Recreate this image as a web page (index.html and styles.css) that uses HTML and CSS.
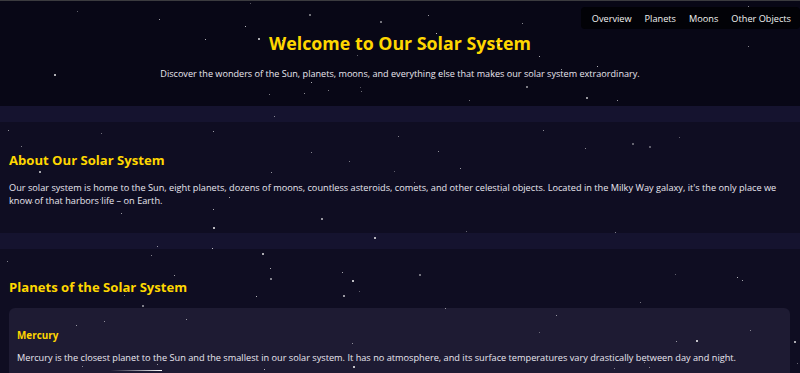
FILE: index.html
```html
<!DOCTYPE html>
<html>
  <head>
    <meta charset="utf-8">
    <title>Our Solar System</title>
    <link rel="stylesheet" href="styles.css">
  </head>
  <body>
    <div id="stars" class="stars"></div>

    <nav class="topnav">
      <a href="#overview">Overview</a>
      <a href="#planets">Planets</a>
      <a href="#moons">Moons</a>
      <a href="#other">Other Objects</a>
    </nav>

    <header class="hero" id="overview">
      <h1>Welcome to Our Solar System</h1>
      <p>Discover the wonders of the Sun, planets, moons, and everything else that makes our solar system extraordinary.</p>
    </header>

    <main>
      <section class="block">
        <h2>About Our Solar System</h2>
        <p>Our solar system is home to the Sun, eight planets, dozens of moons, countless asteroids, comets, and other celestial objects. Located in the Milky Way galaxy, it's the only place we know of that harbors life – on Earth.</p>
      </section>

      <section class="block" id="planets">
        <h2>Planets of the Solar System</h2>
        <div class="card">
          <h3>Mercury</h3>
          <p>Mercury is the closest planet to the Sun and the smallest in our solar system. It has no atmosphere, and its surface temperatures vary drastically between day and night.</p>
        </div>
      </section>
    </main>

    <div class="shooting"></div>

    <script src="stars.js"></script>
  </body>
</html>
```

FILE: styles.css
```css
body {
  margin: 0;
  background-color: #15132f;
  color: #e8e6ef;
  font-family: "Open Sans", "DejaVu Sans", sans-serif;
  border-top: 1px solid #3b3b3f;
  overflow: hidden;
}

.stars {
  position: fixed;
  top: 0;
  left: 0;
  width: 100%;
  height: 100%;
  pointer-events: none;
  z-index: 5;
}
.star {
  position: absolute;
  background: #fff;
  border-radius: 50%;
}

.topnav {
  position: absolute;
  top: 7px;
  right: 0;
  display: flex;
  gap: 13px;
  padding: 0 9px 0 11px;
  height: 22px;
  align-items: center;
  background-color: #020207;
  border-radius: 4px;
  z-index: 10;
}
.topnav a {
  color: #f2f2f2;
  text-decoration: none;
  font-size: 9.2px;
}

.hero {
  background-color: #080716;
  text-align: center;
  padding: 31px 0 26px;
}
.hero h1 {
  margin: 0;
  font-size: 17.8px;
  line-height: 22px;
  font-weight: 700;
  color: #ffd700;
}
.hero p {
  margin: 13px 0 0;
  font-size: 9.1px;
  line-height: 13px;
}

.block {
  background-color: #0f0d22;
  margin: 16px 0;
  padding: 29px 10px 26px 9px;
}
.block h2 {
  margin: 0;
  font-size: 13.1px;
  line-height: 18px;
  color: #ffd700;
  font-weight: 700;
}
.block p {
  margin: 12px 0 0;
  font-size: 9.2px;
  line-height: 13px;
}

.card {
  margin-top: 12px;
  background-color: #1e1b33;
  border-radius: 6px;
  padding: 20px 8px 20px 8px;
}
.card h3 {
  margin: 0;
  font-size: 9.9px;
  line-height: 14px;
  color: #ffd700;
  font-weight: 700;
}
.card p {
  margin-top: 9px;
}

.shooting {
  position: absolute;
  top: 370px;
  left: 110px;
  width: 52px;
  height: 1px;
  background: linear-gradient(to right, rgba(255,255,255,0), #fff);
  z-index: 6;
}
```

FILE: stars.js
```js
// simple seeded random so the sky is the same every load
var seed = 42;
function rnd() {
  seed = (seed * 16807) % 2147483647;
  return (seed - 1) / 2147483646;
}

var sky = document.getElementById('stars');
for (var i = 0; i < 110; i++) {
  var s = document.createElement('div');
  var size = rnd() < 0.25 ? 2 : 1;
  s.className = 'star';
  s.style.left = Math.floor(rnd() * 800) + 'px';
  s.style.top = Math.floor(rnd() * 373) + 'px';
  s.style.width = size + 'px';
  s.style.height = size + 'px';
  s.style.opacity = (0.4 + rnd() * 0.6).toFixed(2);
  sky.appendChild(s);
}
```
